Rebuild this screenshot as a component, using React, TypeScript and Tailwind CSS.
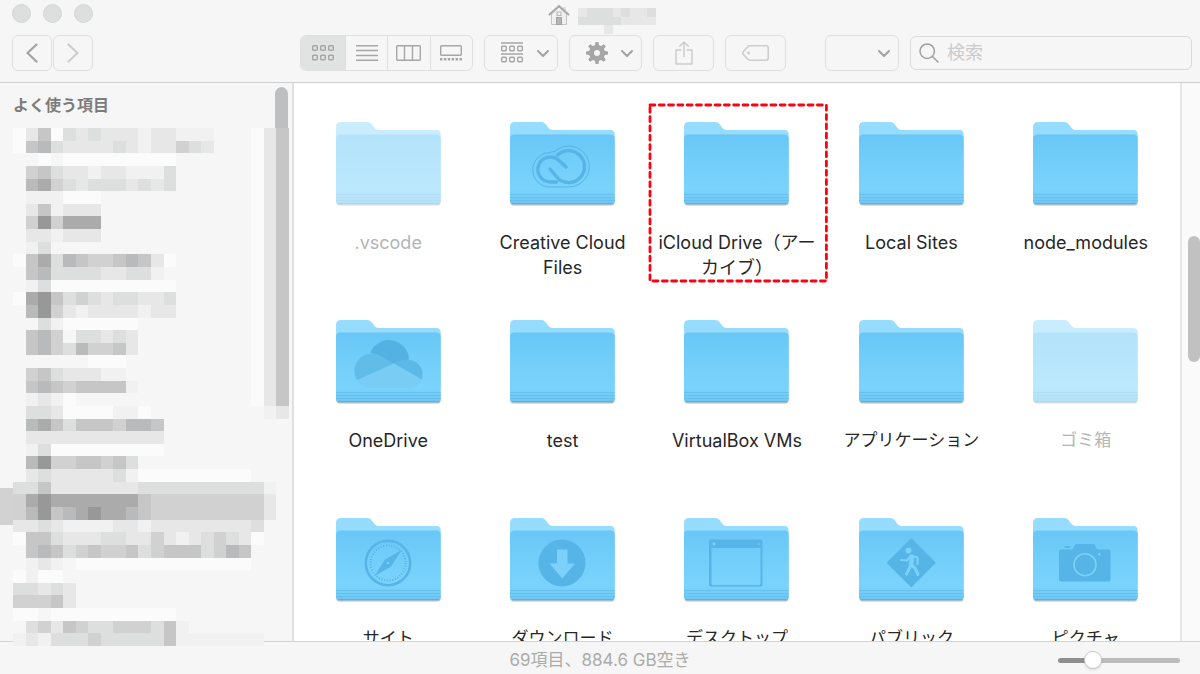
import { useState } from "react";
import type { ReactNode } from "react";

type Entry = {
  name: string;
  lines?: string[];
  glyph?: ReactNode;
  hidden?: boolean;
  marked?: boolean;
  kana?: boolean;
};

const INK = "#57b4e6";
const PALE = "#7bd1fa";

const creativeCloud = (
  <g fill="none" stroke={INK} strokeLinecap="round" strokeLinejoin="round">
    <path
      strokeWidth="1"
      d="M40 30.5C43 29 45 30 46 28.5A20.5 20.5 0 1 1 59 65H40A17.2 17.2 0 0 1 40 30.5Z"
    />
    <path
      strokeWidth="3.4"
      d="M47.5 33A16 16 0 1 1 49 57.5L40 47M56 45L48.5 38A12.5 12.5 0 1 0 40 60H46.5"
    />
  </g>
);

const oneDrive = (
  <g>
    <path fill="#53b2e2" d="M34.5 32.5A20 20 0 0 1 73 39.5L58 43.5Z" />
    <path fill="#62bce8" d="M21 60A17.5 17.5 0 0 1 42 34.5L58 43.5L40 56Z" />
    <path fill="#5cb8e6" d="M58 43.5C63 40 69 39 74 40A14.5 14.5 0 0 1 85.500 60L70 60Z" />
    <path fill="#79ccf4" d="M21 60L58 43.5L86 59.5C83 65 79 68 73 68H35C29 68 24 65 21 60Z" />
  </g>
);

const compass = (
  <g fill="none" stroke={INK}>
    <circle cx="52" cy="45" r="22.2" strokeWidth="2.6" />
    <circle cx="52" cy="45" r="17.5" strokeWidth="2" strokeDasharray="1 1.75" />
    <path fill={INK} stroke="none" d="M65.5 32L55 48.5L38.5 58L49 41.5Z" />
    <circle cx="52" cy="45" r="1.3" fill={PALE} stroke="none" />
  </g>
);

const download = (
  <g>
    <circle cx="52" cy="45" r="23.5" fill={INK} />
    <path fill={PALE} d="M47 31.5H57.5V45.5H65L52.2 60.500L39.5 45.5H47Z" />
  </g>
);

const desktop = (
  <g>
    <path
      fill={INK}
      fillRule="evenodd"
      d="M27 21.500H77Q78.5 21.500 78.5 23V66.500Q78.5 68.500 77 68.500H27Q25 68.500 25 66.500V23Q25 21.500 27 21.500ZM27.5 30V65.500Q27.5 67 29 67H75Q76.5 67 76.5 65.500V30Z"
    />
    <circle cx="30" cy="25.8" r="1.6" fill={PALE} />
    <path d="M72.5 27L74.5 24L76.5 27Z" fill={PALE} opacity=".5" />
  </g>
);

const publicSign = (
  <g>
    <path
      fill={INK}
      stroke={INK}
      strokeWidth="2"
      strokeLinejoin="round"
      d="M52.3 21.5L75.5 44.7L52.3 68L29 44.7Z"
    />
    <circle cx="49.5" cy="32.5" r="3" fill={PALE} />
    <g fill="none" stroke={PALE} strokeLinecap="round" strokeLinejoin="round">
      <path strokeWidth="4.5" d="M53 39L52 47" />
      <path strokeWidth="2.2" d="M42 42L48 42.5L52 37.5L58.5 39.5V46" />
      <path strokeWidth="3" d="M51.5 48L47.5 56M52.5 47L56 50L59 56.5" />
    </g>
  </g>
);

const camera = (
  <g>
    <path
      fill={INK}
      d="M28 31.5H39C41 31.5 40.5 26 44 26H60C63 26 62.5 31.5 65 31.5H75.500Q77.500 31.5 77.500 33.5V61.5Q77.500 63.5 75.500 63.5H28Q26 63.5 26 61.5V33.5Q26 31.5 28 31.5Z"
    />
    <rect x="31.5" y="28" width="5.5" height="2" rx="1" fill={INK} />
    <circle cx="52" cy="46.7" r="11" fill="none" stroke={PALE} strokeWidth="1.6" />
    <circle cx="66.3" cy="36.3" r="1.3" fill={PALE} />
  </g>
);

const entries: Entry[] = [
  { name: ".vscode", hidden: true },
  { name: "Creative Cloud Files", lines: ["Creative Cloud", "Files"], glyph: creativeCloud },
  { name: "iCloud Drive（アーカイブ）", lines: ["iCloud Drive（アー", "カイブ）"], marked: true },
  { name: "Local Sites" },
  { name: "node_modules" },
  { name: "OneDrive", glyph: oneDrive },
  { name: "test" },
  { name: "VirtualBox VMs" },
  { name: "アプリケーション", kana: true },
  { name: "ゴミ箱", hidden: true, kana: true },
  { name: "サイト", glyph: compass, kana: true },
  { name: "ダウンロード", glyph: download, kana: true },
  { name: "デスクトップ", glyph: desktop, kana: true },
  { name: "パブリック", glyph: publicSign, kana: true },
  { name: "ピクチャ", glyph: camera, kana: true },
];

// One digit per tile, light to dark; a dot leaves the tile empty.
const shades = ["#fbfbfb", "#f0f1f0", "#e7e7e7", "#dddfde", "#d1d1d1", "#c6c6c7", "#b9babb", "#ababab", "#989898"];

const sidebarTiles = [
  "0250323222122111...025",
  "0563222232122432...025",
  "..0.000000000......025",
  ".453221221113......025",
  ".674323332323......025",
  ".111000............025",
  ".251222............025",
  ".484777............025",
  ".221222............025",
  ".13................025",
  "0573654456520......025",
  ".56333322331.......025",
  ".130000000000......025",
  "0785343233223......025",
  ".684212222122......025",
  "..31000000.........025",
  ".564.33232.........025",
  ".564364452.........025",
  "......000..........025",
  ".45322211..........025",
  ".565455551.........025",
  ".1210..............025",
  ".3320000110.........12",
  ".67535554665..........",
  ".22222222222..........",
  ".13000000000..........",
  ".684455453............",
  ".232222231000000000...",
  "335222222233333333331.",
  "478777777754444444442.",
  "468567877654444444442.",
  "22321111221222222223..",
  "05532223322421234320..",
  ".565345445345553465...",
  ".121.00000000000000...",
  "0100..................",
  "33232.................",
  "44452.................",
  "00.0000000000.........",
  ".3425433444351........",
  "12133343333351111111..",
];

const titleTiles = ["233323223", "333332222", "...2....."];

function Mosaic({ rows, size, className }: { rows: string[]; size: number; className: string }) {
  return (
    <svg
      className={className}
      viewBox={`0 0 ${rows[0].length * size} ${rows.length * size}`}
      preserveAspectRatio="none"
      shapeRendering="crispEdges"
      aria-hidden="true"
    >
      {rows.map((row, y) =>
        row.split("").map((tile, x) =>
          tile === "." ? null : (
            <rect
              key={`${x}-${y}`}
              x={x * size}
              y={y * size}
              width={size}
              height={size}
              fill={shades[Number(tile)]}
            />
          )
        )
      )}
    </svg>
  );
}

function Folder({ glyph, hidden }: { glyph?: ReactNode; hidden?: boolean }) {
  return (
    <svg
      width="105"
      height="84"
      viewBox="0 0 105 84"
      className={hidden ? "opacity-50" : ""}
      aria-hidden="true"
    >
      <rect x="0.5" y="70" width="104" height="13.5" rx="3" fill="#b5bcc0" />
      <path
        fill="#95dcfe"
        d="M0 5Q0 0 5 0H31Q34 0 35.5 2L38.5 6Q40 8 43 8H100.5Q104.7 8 104.7 12.5V70H0Z"
      />
      <path
        fill="url(#folder-front)"
        d="M0 17Q0 12.5 4.5 12.5H100.2Q104.7 12.5 104.7 17V79Q104.7 82.3 101.5 82.3H3.2Q0 82.3 0 79Z"
      />
      <path stroke="#66bfed" strokeWidth="1" d="M0 72.5H104.7M0 75.5H104.7M0 78.5H104.7" />
      <path stroke="#58b3e3" strokeWidth="1.2" d="M2 81.5H102.7" />
      {glyph}
    </svg>
  );
}

function Chevron() {
  return (
    <svg width="12" height="7" viewBox="0 0 12 7" fill="none" stroke="#a3a3a3" strokeWidth="2" strokeLinecap="round" strokeLinejoin="round">
      <path d="M1 1L6 6L11 1" />
    </svg>
  );
}

function Squares({ y }: { y: number }) {
  return (
    <>
      {[0.7, 8.7, 16.7].map((x) => (
        <rect key={x} x={x} y={y} width="4.6" height="4.6" rx="1" />
      ))}
    </>
  );
}

const views = [
  {
    id: "icons",
    label: "アイコン",
    icon: (
      <svg width="22" height="16" viewBox="0 0 22 16" fill="none" stroke="#a6a6a6" strokeWidth="1.4">
        <Squares y={0.7} />
        <Squares y={10.2} />
      </svg>
    ),
  },
  {
    id: "list",
    label: "リスト",
    icon: (
      <svg width="22" height="16" viewBox="0 0 22 16" stroke="#a6a6a6" strokeWidth="1.4">
        <path d="M0 0.7H22M0 5.5H22M0 10.5H22M0 15.3H22" />
      </svg>
    ),
  },
  {
    id: "columns",
    label: "カラム",
    icon: (
      <svg width="25" height="16" viewBox="0 0 25 16" fill="none" stroke="#a6a6a6" strokeWidth="1.4">
        <rect x="0.7" y="0.7" width="23.6" height="14.6" rx="1" />
        <path d="M8.5 1V15M16.5 1V15" />
      </svg>
    ),
  },
  {
    id: "gallery",
    label: "ギャラリー",
    icon: (
      <svg width="22" height="16" viewBox="0 0 22 16" fill="none" stroke="#a6a6a6" strokeWidth="1.4">
        <rect x="0.7" y="0.7" width="20.6" height="9.6" rx="1" />
        <path strokeWidth="2.4" strokeDasharray="2.4 1.5" d="M0 14.2H22" />
      </svg>
    ),
  },
];

const box = "flex h-9 items-center rounded-md border border-[#dfdfdf]";

export default function App() {
  const [view, setView] = useState("icons");
  const [size, setSize] = useState(25);

  return (
    <div className="flex h-screen flex-col overflow-hidden bg-[#f6f6f6] font-['Inter','Noto_Sans_CJK_JP',sans-serif]">
      <svg width="0" height="0" className="absolute" aria-hidden="true">
        <linearGradient id="folder-front" x1="0" y1="0" x2="0" y2="1">
          <stop offset="0" stopColor="#69c7f6" />
          <stop offset="0.35" stopColor="#71cdf9" />
          <stop offset="0.8" stopColor="#7ad3fc" />
          <stop offset="1" stopColor="#6bc6f4" />
        </linearGradient>
      </svg>

      {/* TITLE + TOOLBAR */}
      <header className="border-b border-[#cfcfcf] pb-[11px] pl-3 pr-2 pt-1">
        <div className="grid h-5 grid-cols-[1fr_auto_1fr] items-start">
          <div className="flex gap-3">
            <button aria-label="閉じる" className="size-[19px] rounded-full border border-[#d3d6d4] bg-[#dcdfdd]" />
            <button aria-label="しまう" className="size-[19px] rounded-full border border-[#d3d6d4] bg-[#dcdfdd]" />
            <button aria-label="拡大" className="size-[19px] rounded-full border border-[#d3d6d4] bg-[#dcdfdd]" />
          </div>
          <div className="flex items-start gap-2">
            <svg width="22" height="22" viewBox="0 0 22 22" aria-hidden="true">
              <path fill="#dcdcdc" d="M15 3H18V8H15Z" />
              <path fill="#f0f0f0" stroke="#c4c4c4" d="M3.5 10L11 3L18.5 10V20.5H3.5Z" />
              <path fill="none" stroke="#a8a8a8" strokeWidth="2" strokeLinecap="round" d="M1.5 10.5L11 2L20.5 10.5" />
              <rect x="9" y="8" width="4" height="3.5" fill="none" stroke="#b5b5b5" />
              <rect x="8.5" y="13.5" width="5" height="7" fill="#b4b4b4" stroke="#a3a3a3" />
            </svg>
            <Mosaic rows={titleTiles} size={9} className="mt-1 h-[26px] w-[78px]" />
          </div>
        </div>

        <div className="mt-[11px] flex items-center gap-[11px]">
          <nav className="flex w-[277px] gap-px">
            <button aria-label="戻る" className={`${box} w-10 justify-center`}>
              <svg width="12" height="20" viewBox="0 0 12 20" fill="none" stroke="#a3a3a3" strokeWidth="2.2" strokeLinecap="round" strokeLinejoin="round">
                <path d="M10.5 1.5L1.5 10L10.5 18.5" />
              </svg>
            </button>
            <button aria-label="進む" className={`${box} w-10 justify-center`}>
              <svg width="12" height="20" viewBox="0 0 12 20" fill="none" stroke="#cdcdcd" strokeWidth="2.2" strokeLinecap="round" strokeLinejoin="round">
                <path d="M1.5 1.5L10.5 10L1.5 18.5" />
              </svg>
            </button>
          </nav>

          <div className={`${box} w-[173px] divide-x divide-[#dfdfdf] overflow-hidden`}>
            {views.map((v) => (
              <button
                key={v.id}
                aria-label={v.label}
                aria-pressed={view === v.id}
                onClick={() => setView(v.id)}
                className={`flex h-full flex-1 items-center justify-center first:flex-none first:w-[45px] ${view === v.id ? "bg-[#e1e3e2]" : ""}`}
              >
                {v.icon}
              </button>
            ))}
          </div>

          <button aria-label="グループ" className={`${box} w-[74px] justify-between pl-4 pr-2`}>
            <svg width="22" height="22" viewBox="0 0 22 22" fill="none" stroke="#a6a6a6" strokeWidth="1.4">
              <path d="M0 1H22M0 12H22" />
              <Squares y={4.2} />
              <Squares y={15.2} />
            </svg>
            <Chevron />
          </button>

          <button aria-label="操作" className={`${box} w-[73px] justify-between pl-4 pr-2`}>
            <svg width="22" height="22" viewBox="-11 -11 22 22" aria-hidden="true">
              <circle r="5.5" fill="none" stroke="#a6a6a6" strokeWidth="5" />
              {[0, 45, 90, 135].map((a) => (
                <path key={a} transform={`rotate(${a})`} fill="#a6a6a6" d="M-2.2 -7L-1.5 -11H1.5L2.2 -7ZM-2.2 7L-1.5 11H1.5L2.2 7Z" />
              ))}
            </svg>
            <Chevron />
          </button>

          <button aria-label="共有" className={`${box} w-[61px] justify-center`}>
            <svg width="18" height="24" viewBox="0 0 18 24" fill="none" stroke="#cdcdcd" strokeWidth="1.5" strokeLinejoin="round" strokeLinecap="round">
              <path d="M6 9H1V23H17V9H12M9 15.5V1M4.7 5.3L9 1L13.3 5.3" />
            </svg>
          </button>

          <button aria-label="タグ" className={`${box} w-[61px] justify-center`}>
            <svg width="27" height="16" viewBox="0 0 27 16" fill="none" stroke="#cdcdcd" strokeWidth="1.6" strokeLinejoin="round">
              <path d="M8 0.8H24Q26.2 0.8 26.2 3V13Q26.2 15.2 24 15.2H8Q6.5 15.2 5.5 14L1.3 9.3Q0.3 8 1.3 6.7L5.5 2Q6.5 0.8 8 0.8Z" />
              <circle cx="6.5" cy="8" r="1.4" fill="#cdcdcd" stroke="none" />
            </svg>
          </button>

          <div className={`${box} relative ml-7 w-[74px] justify-end pr-2`}>
            <select aria-label="表示オプション" className="absolute inset-0 appearance-none rounded-md bg-transparent">
              <option></option>
            </select>
            <Chevron />
          </div>

          <label className="flex h-[34px] flex-1 items-center gap-2 rounded-md border border-[#dadada] px-2">
            <svg width="20" height="20" viewBox="0 0 20 20" fill="none" stroke="#a0a0a0" strokeWidth="1.5" strokeLinecap="round" className="shrink-0">
              <circle cx="8.2" cy="8.2" r="7.2" />
              <path d="M13.5 13.5L19 19" />
            </svg>
            <input
              type="search"
              aria-label="検索"
              placeholder="検索"
              className="w-full min-w-0 bg-transparent text-lg outline-none placeholder:text-[#cbcbcb]"
            />
          </label>
        </div>
      </header>

      <div className="flex min-h-0 flex-1">
        {/* SIDEBAR */}
        <aside className="relative z-10 w-[294px] shrink-0 border-r-2 border-[#e0e0e0] pl-[13px]">
          <div className="flex h-[45px] items-start justify-between pr-1 pt-1">
            <h2 className="pt-1.5 text-base leading-6 font-bold text-[#7c7c7c]">よく使う項目</h2>
            <div className="h-full w-[13px] rounded-t-full bg-[#bebfc0]" />
          </div>
          <div className="relative">
            <div className="absolute -left-[13px] top-[360px] h-[37px] w-[13px] bg-[#d2d2d2]" />
            <Mosaic rows={sidebarTiles} size={10} className="relative h-[518px] w-[276px]" />
          </div>
        </aside>

        {/* FOLDERS */}
        <main className="min-w-0 flex-1 overflow-hidden bg-white">
          <ul className="grid grid-cols-5 gap-y-10 px-[7px] pt-[39px]">
            {entries.map((entry) => (
              <li key={entry.name} className="relative flex flex-col items-center">
                <Folder glyph={entry.glyph} hidden={entry.hidden} />
                <p
                  className={`mt-6 min-h-[50px] whitespace-nowrap text-center leading-[25px] ${
                    entry.kana ? "text-[17px]" : "text-lg"
                  } ${entry.hidden ? "text-[#b4b4b4]" : "text-[#262626]"}`}
                >
                  {(entry.lines ?? [entry.name]).map((line) => (
                    <span key={line} className="block leading-[25px]">
                      {line}
                    </span>
                  ))}
                </p>
                {entry.marked && (
                  <svg className="absolute -top-[17px] left-0 h-44 w-[calc(100%+2px)] overflow-visible" aria-hidden="true">
                    <rect
                      width="100%"
                      height="100%"
                      fill="none"
                      stroke="#ff0010"
                      strokeWidth="2.8"
                      strokeLinecap="round"
                      strokeDasharray="4.9 4.4"
                    />
                  </svg>
                )}
              </li>
            ))}
          </ul>
        </main>

        <div className="w-5 shrink-0 border-l-2 border-[#e6e6e6] bg-[#fafafa] pl-[6px] pt-[153px]">
          <div className="h-[126px] rounded-full bg-[#c1c1c1]" />
        </div>
      </div>

      {/* STATUS BAR */}
      <footer className="grid grid-cols-[1fr_auto_1fr] items-center border-t border-[#d2d2d2] px-5 pb-0.5 pt-1.5">
        <span />
        <p className="text-[17px] leading-6 text-[#ababab]">69項目、884.6 GB空き</p>
        <input
          type="range"
          aria-label="アイコンサイズ"
          value={size}
          onChange={(e) => setSize(Number(e.target.value))}
          className="h-[5px] w-[122px] appearance-none justify-self-end rounded-full bg-[linear-gradient(to_right,#8f8f8f_28%,#bcbcbc_28%)] [&::-webkit-slider-thumb]:size-[18px] [&::-webkit-slider-thumb]:appearance-none [&::-webkit-slider-thumb]:rounded-full [&::-webkit-slider-thumb]:border [&::-webkit-slider-thumb]:border-[#c8c8c8] [&::-webkit-slider-thumb]:bg-white [&::-webkit-slider-thumb]:shadow-sm"
        />
      </footer>
    </div>
  );
}
